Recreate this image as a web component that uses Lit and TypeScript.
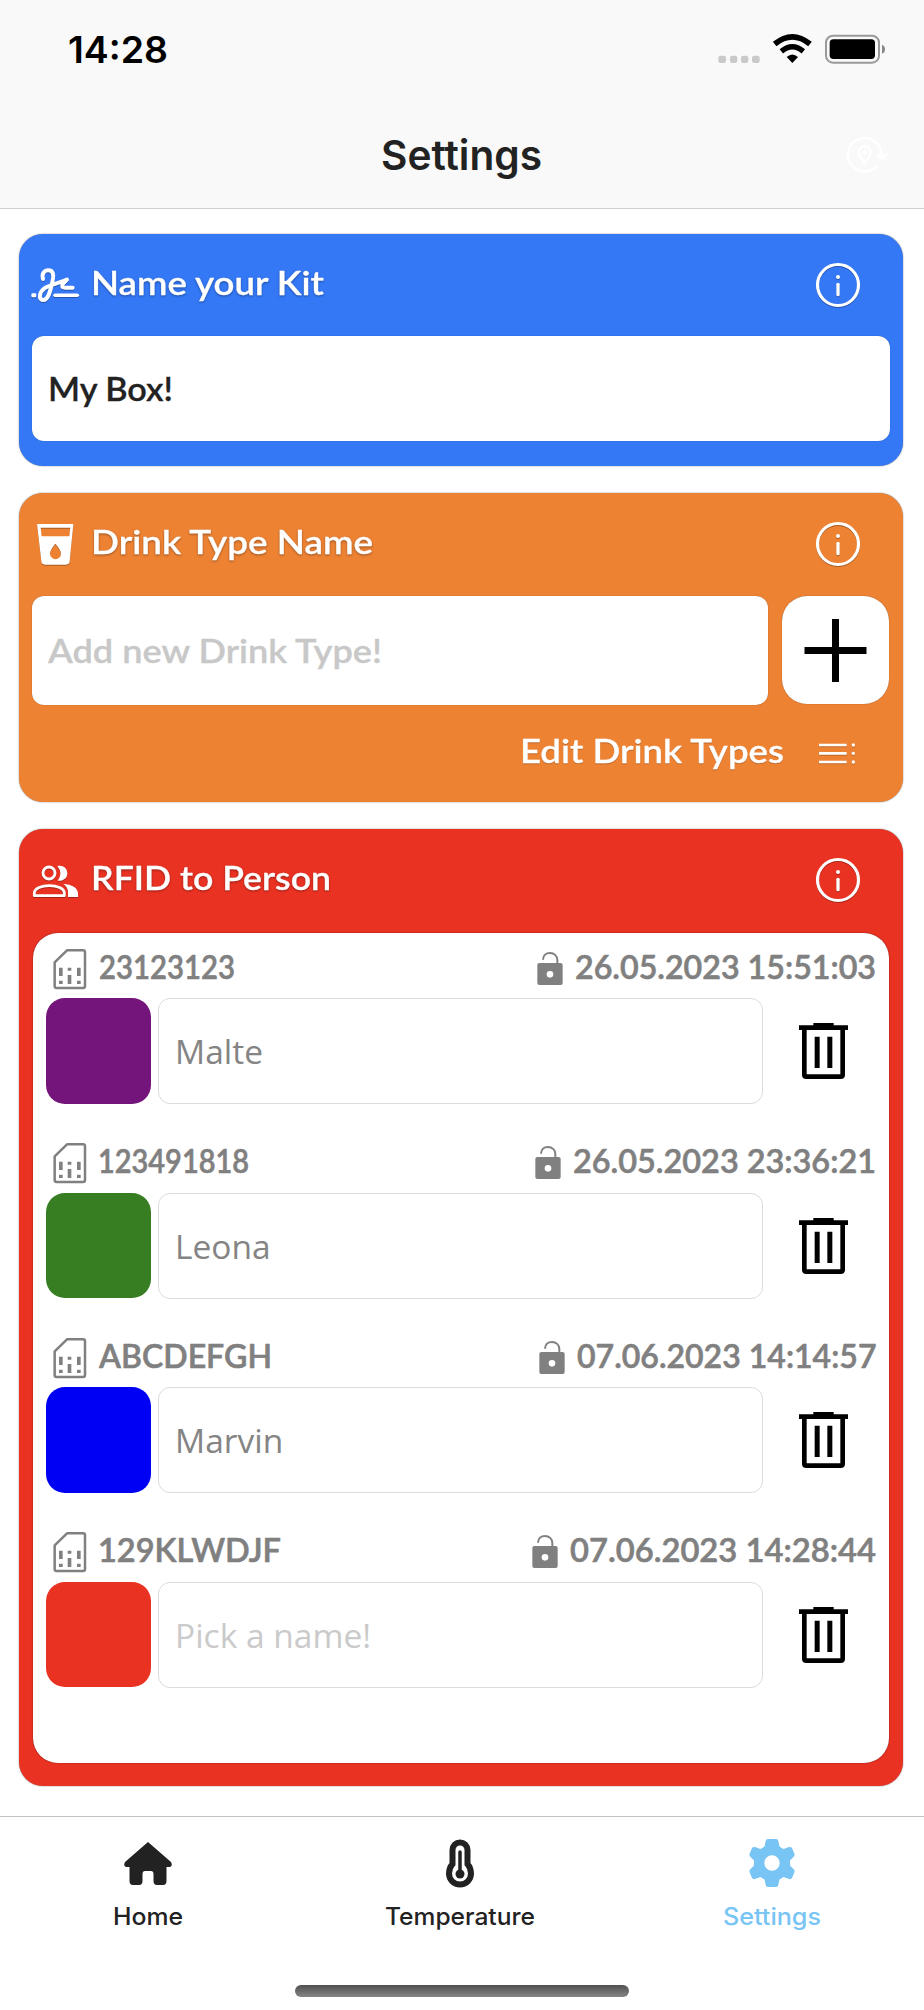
import { LitElement, html, svg, css } from "lit";
import { customElement, property } from "lit/decorators.js";

interface Tag {
  id: string;
  idX: number;
  idWidth: number;
  date: string;
  dateWidth: number;
  color: string;
  name: string;
}

const TAGS: Tag[] = [
  { id: "23123123", idX: 12, idWidth: 136, date: "26.05.2023 15:51:03", dateWidth: 301, color: "#73157a", name: "Malte" },
  { id: "123491818", idX: 11, idWidth: 151, date: "26.05.2023 23:36:21", dateWidth: 303, color: "#377e22", name: "Leona" },
  { id: "ABCDEFGH", idX: 12, idWidth: 173, date: "07.06.2023 14:14:57", dateWidth: 299.5, color: "#0000f5", name: "Marvin" },
  { id: "129KLWDJF", idX: 11, idWidth: 183, date: "07.06.2023 14:28:44", dateWidth: 306, color: "#ea3223", name: "" },
];

/** A line of text stretched to an exact advance width. */
@customElement("fit-label")
export class FitLabel extends LitElement {
  @property() text = "";
  @property({ type: Number }) width = 100;

  static styles = css`
    :host { display: block; flex: none; }
    svg { display: block; overflow: visible; }
    text {
      font-family: var(--label-font, Lato, sans-serif);
      font-size: var(--label-size, 33px);
      font-weight: var(--label-weight, 600);
      fill: currentColor;
      stroke: currentColor;
      stroke-width: var(--label-stroke, 0.3px);
      stroke-linejoin: round;
    }
  `;

  render() {
    return html`<svg width=${this.width} height="44">
      <text x="0" y="33" textLength=${this.width} lengthAdjust="spacingAndGlyphs">${this.text}</text>
    </svg>`;
  }
}

const wifi = svg`<g fill="none" stroke="#000">
  <path d="M938 132 Q991 89 1044 132" stroke-width="17"/>
  <path d="M958 154 Q991 127 1024 154" stroke-width="16"/></g>
  <path d="M974 171 Q991 156 1008 171 L991 189Z"/>`;

const signature = svg`<g fill="none" stroke="#fff" stroke-width="12" stroke-linecap="round" stroke-linejoin="round">
  <path d="M129 177 C124 160 134 151 145 151 C160 151 162 166 158 181 C153 203 147 240 130 240 C113 240 119 215 133 205 C154 192 177 189 201 179 C192 188 184 194 187 200 C190 205 205 203 218 203"/>
  <path d="M165 226H232" stroke-width="10.500"/></g><rect x="94" y="220" width="15" height="12" rx="4" fill="#fff"/>`;

const cup = svg`<path fill="#fff" fill-rule="evenodd" d="M111 132H220L209 244Q208 254 198 254H135Q125 254 124 244Z M122 143L125 169H208L211 143Z M166 191Q150 210 150 221A16 16 0 0 0 183 221Q183 210 166 191Z"/>`;

const people = svg`<g fill="none" stroke="#fff" stroke-width="8.500">
  <circle cx="147" cy="159" r="18"/>
  <path d="M103 227V219C103 204 126 197 148 197S193 204 193 219V227Z" stroke-linejoin="round"/></g>
  <path fill="#fff" d="M172 138C188 134 202 144 202 160S188 185 173 182Q190 160 172 138Z M190 192C215 193 234 204 234 220V231H204V216Q204 203 190 192Z"/>`;

const info = svg`<circle cx="1128" cy="196" r="61.5" fill="none" stroke="#fff" stroke-width="9.500"/>
  <circle cx="1128" cy="172" r="6" fill="#fff"/><path d="M1128 194V225" stroke="#fff" stroke-width="10" stroke-linecap="round"/>`;

const sim = svg`<path d="M201 391H249Q255 391 255 397V498Q255 504 249 504H170Q164 504 164 498V427Z" fill="none" stroke="#808080" stroke-width="7.500" stroke-linejoin="round"/>
  <path fill="#808080" d="M177 443h11v25h-11zM177 482h11v10h-11zM203 443h11v9h-11zM203 465h11v27h-11zM231 443h11v25h-11zM231 482h11v10h-11z"/>`;

const lock = svg`<path d="M245 419C245 406 254 399 266 399S288 407 288 420V434" fill="none" stroke="#808080" stroke-width="6"/>
  <path fill="#808080" fill-rule="evenodd" d="M234 429H298Q304 429 304 435V489Q304 495 298 495H234Q228 495 228 489V435Q228 429 234 429Z M266 453A10 10 0 1 0 266 473A10 10 0 1 0 266 453Z"/>`;

const trash = svg`<path fill-rule="evenodd" d="M1054 609H1115V616H1158V630H1149V764Q1149 777 1136 777H1033Q1020 777 1020 764V630H1011V616H1054Z M1034 630V763H1135V630Z M1058 650H1073V744H1058Z M1096 650H1111V744H1096Z"/>`;

const relocate = svg`<g fill="none" stroke="#fff" stroke-width="8"><path d="M1243 500A50 50 0 1 1 1258 462"/></g>
  <path fill="#fff" d="M1240 461H1280L1260 483Z"/>
  <path fill="#fff" fill-rule="evenodd" d="M1208 435C1195 435 1187 445 1187 457C1187 472 1208 495 1208 495S1229 472 1229 457C1229 445 1221 435 1208 435Z M1208 443A14 14 0 0 1 1222 457Q1220 468 1208 482Q1196 468 1194 457A14 14 0 0 1 1208 443Z"/><circle cx="1208" cy="457" r="8" fill="#fff"/>`;

@customElement("app-root")
export class AppRoot extends LitElement {
  static styles = css`
    :host { display: block; }
    * { box-sizing: border-box; }
    svg { display: block; flex: none; }
    .screen { width: 924px; height: 2010px; display: flex; flex-direction: column; background: #fff; color: #222; font-family: Inter, sans-serif; overflow: hidden; }
    header { height: 209px; flex: none; background: #f9f9f9; border-bottom: 1px solid #cfcfcf; }
    .status { height: 100px; padding: 17px 37px 0 68px; display: flex; justify-content: space-between; }
    .clock { color: #000; --label-font: Inter, sans-serif; --label-size: 37px; --label-weight: 600; --label-stroke: 0; padding-top: 13px; }
    .indicators { display: flex; }
    .nav { display: grid; grid-template-columns: 1fr auto 1fr; padding: 0 33px 0 35px; }
    .title { grid-column: 2; padding-top: 37px; margin-left: -3px; --label-font: Inter, sans-serif; --label-size: 41px; --label-weight: 600; --label-stroke: 0; }
    .nav svg { justify-self: end; margin-top: 31px; }
    main { flex: 1; padding: 25px 21px 0 19px; display: flex; flex-direction: column; gap: 27px; }
    .card { border-radius: 24px; box-shadow: 0 0 1.5px rgba(0, 0, 0, .6); flex: none; }
    .blue { background: #3478f6; height: 232px; }
    .orange { background: #ed8233; height: 309px; }
    .red { background: #ea3223; height: 956.5px; }
    .head { display: flex; height: 102px; padding: 28px 42.5px 0 11px; color: #fff; }
    .head fit-label { margin-left: 9px; filter: drop-shadow(0 1px 1px rgba(0, 0, 0, .35)); }
    .head svg { filter: drop-shadow(0 1px .6px rgba(0, 0, 0, .3)); }
    .red .head { height: 103.5px; }
    .orange .head { height: 102.5px; }
    .head .info { margin-left: auto; }
    .field { background: #fff; border-radius: 12px; box-shadow: 0 0 1px rgba(0, 0, 0, .4); }
    .kit { margin: 0 13px 0 12.5px; height: 104.5px; padding: 32px 0 0 16px; }
    .entry { display: flex; gap: 14px; padding-left: 12.5px; align-items: center; }
    .drink { width: 736px; height: 109.5px; padding: 34px 0 0 16px; color: #c8c8c8; }
    .add { width: 107.5px; height: 108px; border-radius: 25px; background: #fff; display: grid; place-items: center; box-shadow: 0 0 1px rgba(0, 0, 0, .5); }
    .edit { display: flex; justify-content: flex-end; padding: 24.5px 47px 0 0; gap: 34.5px; color: #fff; }
    .edit fit-label, .edit svg { filter: drop-shadow(0 1px .6px rgba(0, 0, 0, .2)); }
    .edit svg { margin-top: 11px; }
    .list { margin: 0 14px; height: 830px; border-radius: 25px; background: #fff; box-shadow: 0 0 1.5px rgba(0, 0, 0, .6); }
    .row { height: 194.5px; padding-left: 13px; }
    .meta { height: 65.5px; display: flex; color: #808080; padding: 13px 13px 0 7px; --label-stroke: 0.6px; }
    .meta .date { margin: 0 0 0 12px; }
    .meta .lock { margin-left: auto; }
    .person { display: flex; align-items: flex-start; }
    .swatch { width: 105px; height: 105.5px; border-radius: 19px; }
    .name { margin-left: 7px; width: 605px; height: 106px; border: 1px solid #dcdcdc; border-radius: 12px; padding-left: 16px; font: 400 33.5px/104px "Open Sans", "Noto Sans", sans-serif; color: #848484; }
    .name.empty { color: #cacaca; }
    .trash { margin: 23px 0 0 34.5px; }
    .tabs { height: 194px; flex: none; border-top: 1px solid #c2c2c2; display: flex; flex-direction: column; align-items: center; --label-font: Inter, sans-serif; --label-size: 24px; --label-weight: 500; --label-stroke: 0; }
    .items { display: flex; height: 168px; margin-right: 4px; }
    .tab { width: 312px; flex: none; display: flex; flex-direction: column; align-items: center; padding-top: 17px; }
    .active { color: #78c5f5; }
    .handle { width: 334px; height: 12px; border-radius: 6px; background: linear-gradient(#505050, #858585); margin-right: 1px; }
  `;

  private info() {
    return html`<svg class="info" width="46" height="46" viewBox="1059 127 138 138">${info}</svg>`;
  }

  private tag(t: Tag) {
    return html`<div class="row">
      <div class="meta">
        <svg width="34" height="46" viewBox="159 378 102 138">${sim}</svg>
        <fit-label style="margin-left:${t.idX}px" text=${t.id} width=${t.idWidth}></fit-label>
        <svg class="lock" width="26" height="46" viewBox="227 378 78 138">${lock}</svg>
        <fit-label class="date" text=${t.date} width=${t.dateWidth}></fit-label>
      </div>
      <div class="person">
        <div class="swatch" style="background:${t.color}"></div>
        <div class="name ${t.name ? "" : "empty"}">${t.name || "Pick a name!"}</div>
        <svg class="trash" width="51" height="60" viewBox="1008 603 153 180">${trash}</svg>
      </div>
    </div>`;
  }

  render() {
    return html`<div class="screen">
      <header>
        <div class="status">
          <fit-label class="clock" text="14:28" width="100"></fit-label>
          <div class="indicators">
            <svg width="170" height="60" viewBox="765 51 510 180">
              <g fill="#c9c9c9"><rect x="769" y="167" width="23" height="22" rx="7"/><rect x="804" y="167" width="22" height="22" rx="7"/><rect x="837" y="167" width="22" height="22" rx="7"/><rect x="870" y="167" width="23" height="22" rx="7"/></g>
              ${wifi}
              <rect x="1092" y="107" width="159" height="81" rx="21" fill="none" stroke="#999" stroke-width="6"/>
              <rect x="1103" y="118" width="136" height="59" rx="11"/>
              <path d="M1260 134Q1269 137 1269 147.500T1260 161Z" fill="#888"/>
            </svg>
          </div>
        </div>
        <div class="nav">
          <div class="title"><fit-label text="Settings" width="161"></fit-label></div>
          <svg width="46" height="48" viewBox="1149 393 138 144">${relocate}</svg>
        </div>
      </header>
      <main>
        <section class="card blue">
          <div class="head">
            <svg width="52" height="44" viewBox="90 126 156 132">${signature}</svg>
            <fit-label text="Name your Kit" width="233"></fit-label>
            ${this.info()}
          </div>
          <div class="field kit"><fit-label text="My Box!" width="125"></fit-label></div>
        </section>
        <section class="card orange">
          <div class="head">
            <svg width="52" height="44" viewBox="90 123 156 132">${cup}</svg>
            <fit-label text="Drink Type Name" width="282"></fit-label>
            ${this.info()}
          </div>
          <div class="entry">
            <div class="field drink"><fit-label text="Add new Drink Type!" width="334"></fit-label></div>
            <div class="add"><svg width="63" height="63" viewBox="0 0 63 63"><path d="M0.500 31.500H62.500M31.500 0V63" stroke="#000" stroke-width="7"/></svg></div>
          </div>
          <div class="edit">
            <fit-label text="Edit Drink Types" width="264"></fit-label>
            <svg width="38" height="26" viewBox="1071 783 114 78"><path d="M1074 795H1157M1074 820H1157M1074 846H1157" stroke="#fff" stroke-width="8"/><g fill="#fff"><circle cx="1177" cy="795" r="5"/><circle cx="1177" cy="820" r="5"/><circle cx="1177" cy="846" r="5"/></g></svg>
          </div>
        </section>
        <section class="card red">
          <div class="head">
            <svg width="52" height="44" viewBox="90 111 156 132">${people}</svg>
            <fit-label text="RFID to Person" width="240"></fit-label>
            ${this.info()}
          </div>
          <div class="list">${TAGS.map((t) => this.tag(t))}</div>
        </section>
      </main>
      <nav class="tabs">
        <div class="items">
          <div class="tab">
            <svg width="50" height="58" viewBox="0 0 50 58" fill="#222"><path d="M25 8L48 28Q50.500 33 45 33H43.500V47Q43.500 51 40 51H34Q30.500 51 30.500 47V40Q30.500 37 28 37H22Q19.500 37 19.500 40V47Q19.500 51 16 51H10Q6.500 51 6.500 47V33H5Q-0.500 33 2 28L25 8Z"/></svg>
            <fit-label text="Home" width="70"></fit-label>
          </div>
          <div class="tab">
            <svg width="50" height="58" viewBox="0 0 50 58" fill="none" stroke="#222"><path d="M17.500 16A7.500 7.500 0 0 1 32.500 16V30Q36 34 36 39.500A11 11 0 0 1 14 39.500Q14 34 17.500 30Z" stroke-width="6"/><path d="M25 18V38" stroke-width="3.500" stroke-linecap="round"/><circle cx="25" cy="40" r="4.500" fill="#222" stroke="none"/></svg>
            <fit-label text="Temperature" width="150"></fit-label>
          </div>
          <div class="tab active">
            <svg width="50" height="58" viewBox="-25 -29 50 58"><path fill="currentColor" fill-rule="evenodd" d="M-4 -24H4Q6 -24 6.300 -22L7.500 -16.500L11.500 -14L17 -16Q19 -16.500 20 -15L22.500 -9Q23 -7.500 21.500 -6L18 -2.500V2.500L21.500 6Q23 7.500 22.500 9L20 15Q19 16.500 17 16L11.500 14L7.500 16.500L6.300 22Q6 24 4 24H-4Q-6 24 -6.300 22L-7.500 16.500L-11.500 14L-17 16Q-19 16.500 -20 15L-22.500 9Q-23 7.500 -21.500 6L-18 2.500V-2.500L-21.500 -6Q-23 -7.500 -22.500 -9L-20 -15Q-19 -16.500 -17 -16L-11.500 -14L-7.500 -16.500L-6.300 -22Q-6 -24 -4 -24ZM0 -7.700A7.700 7.700 0 1 0 0 7.700A7.700 7.700 0 1 0 0 -7.700Z"/></svg>
            <fit-label text="Settings" width="98"></fit-label>
          </div>
        </div>
        <div class="handle"></div>
      </nav>
    </div>`;
  }
}
